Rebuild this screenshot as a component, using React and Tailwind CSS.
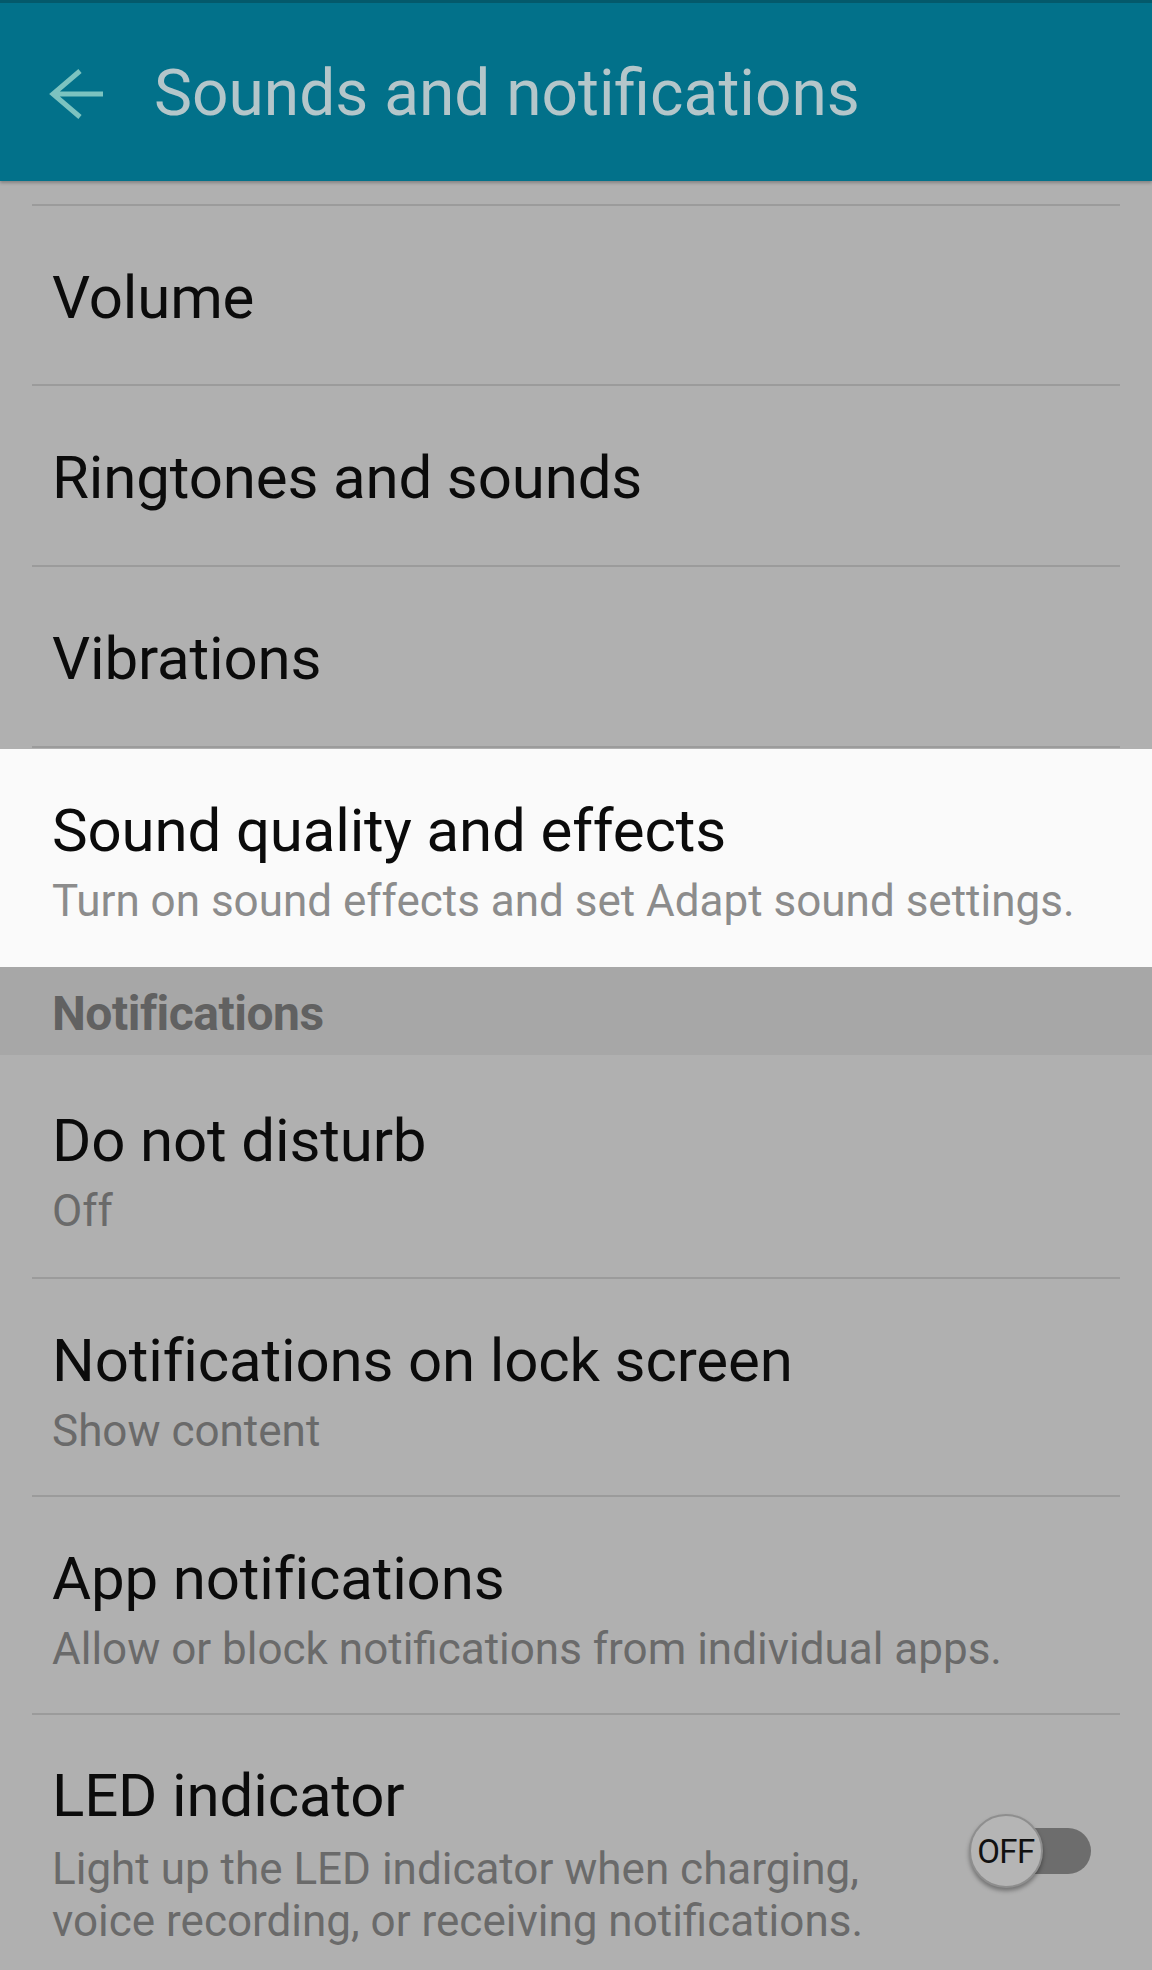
import React from "react";

function Divider() {
  return <div className="mx-[32px] h-[2px] bg-[#9b9b9b] shrink-0" />;
}

function Title({ children }) {
  return (
    <div className="text-[60px] leading-[72px] text-[#0b0b0b] whitespace-nowrap tracking-[-0.15px]">
      {children}
    </div>
  );
}

function Sub({ children, light, extra }) {
  const base = extra ? "mt-[11px]" : "mt-[8px]";
  return (
    <div
      className={
        base +
        (light
          ? " text-[44px] leading-[52px] text-[#8c8c8c]"
          : " text-[44px] leading-[52px] text-[#6a6a6a]")
      }
    >
      {children}
    </div>
  );
}

function Toggle() {
  return (
    <div className="relative w-[122px] h-[78px] shrink-0">
      <div className="absolute right-0 top-[14px] w-[100px] h-[46px] rounded-full bg-[#6d6d6d]" />
      <div className="absolute left-0 top-0 w-[74px] h-[74px] rounded-full bg-[#b5b5b5] border-[2px] border-[#8e8e8e] shadow-[0_3px_4px_rgba(0,0,0,0.35)] flex items-center justify-center">
        <span className="text-[33px] leading-none text-[#111111] tracking-[-0.5px]">OFF</span>
      </div>
    </div>
  );
}

export default function App() {
  return (
    <div className="w-[1152px] h-[1970px] overflow-hidden bg-[#b0b0b0] font-['Roboto','Liberation_Sans',sans-serif] flex flex-col">
      {/* Header */}
      <div className="h-[181px] shrink-0 bg-[#02718a] border-t-[3px] border-[#04596b] flex items-center pl-[48px] shadow-[0_2px_3px_rgba(0,0,0,0.25)] relative z-10">
        <svg width="58" height="52" viewBox="0 0 58 52" className="mt-[4px] shrink-0">
          <path
            d="M55 26 H5 M32 3 L5 26 L32 49"
            fill="none"
            stroke="#7cc3c0"
            strokeWidth="5"
            strokeLinejoin="miter"
          />
        </svg>
        <div className="ml-[48px] mt-[4px] text-[64px] leading-[76px] text-[#b4c6ca] whitespace-nowrap">
          Sounds and notifications
        </div>
      </div>

      {/* Top spacer */}
      <div className="h-[23px] shrink-0" />
      <Divider />

      <div className="pl-[52px] pt-[56px] pb-[50px] shrink-0">
        <Title>Volume</Title>
      </div>
      <Divider />

      <div className="pl-[52px] pt-[56px] pb-[51px] shrink-0">
        <Title>Ringtones and sounds</Title>
      </div>
      <Divider />

      <div className="pl-[52px] pt-[56px] pb-[51px] shrink-0">
        <Title>Vibrations</Title>
      </div>
      <Divider />

      {/* Highlighted row */}
      <div className="bg-[#fafafa] pl-[52px] pt-[46px] pb-[40px] shrink-0 mt-[1px]">
        <Title>Sound quality and effects</Title>
        <Sub light>Turn on sound effects and set Adapt sound settings.</Sub>
      </div>

      {/* Section header */}
      <div className="bg-[#a7a7a7] h-[88px] pl-[52px] pt-[19px] shrink-0">
        <div className="text-[48px] leading-[56px] font-bold text-[#616161] tracking-[-0.5px]">
          Notifications
        </div>
      </div>

      <div className="pl-[52px] pt-[50px] pb-[40px] shrink-0">
        <Title>Do not disturb</Title>
        <Sub>Off</Sub>
      </div>
      <Divider />

      <div className="pl-[52px] pt-[46px] pb-[38px] shrink-0">
        <Title>Notifications on lock screen</Title>
        <Sub>Show content</Sub>
      </div>
      <Divider />

      <div className="pl-[52px] pt-[46px] pb-[38px] shrink-0">
        <Title>App notifications</Title>
        <Sub>Allow or block notifications from individual apps.</Sub>
      </div>
      <Divider />

      <div className="flex pl-[52px] pr-[61px] pt-[45px] shrink-0">
        <div className="flex-1">
          <Title>LED indicator</Title>
          <Sub extra>
            Light up the LED indicator when charging,
            <br />
            voice recording, or receiving notifications.
          </Sub>
        </div>
        <div className="mt-[54px]">
          <Toggle />
        </div>
      </div>
    </div>
  );
}
